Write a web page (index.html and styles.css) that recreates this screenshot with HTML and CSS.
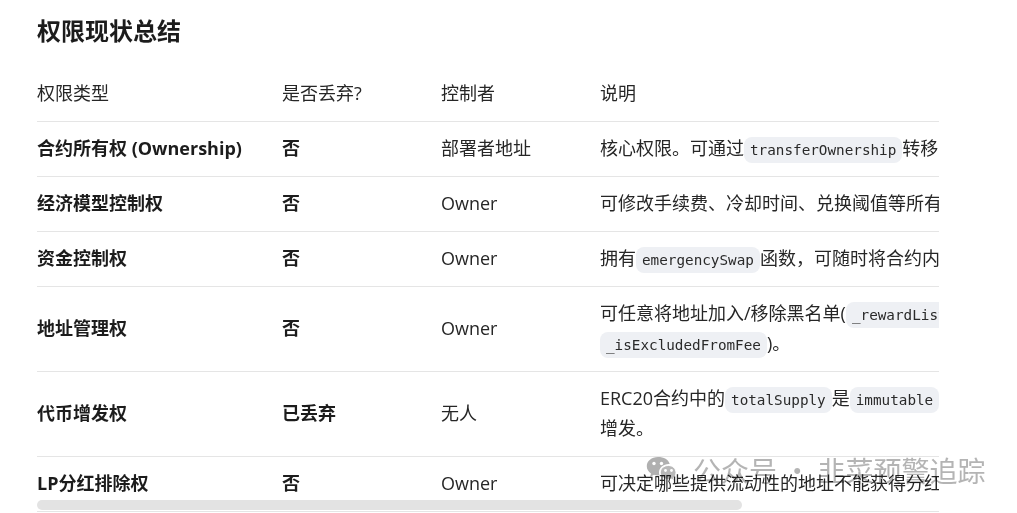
FILE: index.html
```html
<!DOCTYPE html>
<html lang="zh-CN">
<head>
<meta charset="utf-8">
<title>权限现状总结</title>
<link rel="stylesheet" href="styles.css">
</head>
<body>
<main class="page">
  <h2 class="title">权限现状总结</h2>
  <div class="table-wrap">
    <table class="perm">
      <colgroup>
        <col class="c1"><col class="c2"><col class="c3"><col class="c4">
      </colgroup>
      <thead>
        <tr><th>权限类型</th><th>是否丢弃?</th><th>控制者</th><th>说明</th></tr>
      </thead>
      <tbody>
        <tr><td><b>合约所有权 (Ownership)</b></td><td><b>否</b></td><td>部署者地址</td><td>核心权限。可通过<code>transferOwnership</code>转移或放弃所有权。</td></tr>
        <tr><td><b>经济模型控制权</b></td><td><b>否</b></td><td>Owner</td><td>可修改手续费、冷却时间、兑换阈值等所有经济参数。</td></tr>
        <tr><td><b>资金控制权</b></td><td><b>否</b></td><td>Owner</td><td>拥有<code>emergencySwap</code>函数，可随时将合约内代币兑换转出。</td></tr>
        <tr><td><b>地址管理权</b></td><td><b>否</b></td><td>Owner</td><td>可任意将地址加入/移除黑名单(<code>_rewardList</code>)和免费名单(<br><code>_isExcludedFromFee</code>)。</td></tr>
        <tr><td><b>代币增发权</b></td><td><b>已丢弃</b></td><td>无人</td><td>ERC20合约中的<code>totalSupply</code>是<code>immutable</code>的，总量固定无法<br>增发。</td></tr>
        <tr><td><b>LP分红排除权</b></td><td><b>否</b></td><td>Owner</td><td>可决定哪些提供流动性的地址不能获得分红。</td></tr>
      </tbody>
    </table>
    <div class="thumb"></div>
  </div>
  <div class="watermark">
    <svg class="wx" viewBox="0 0 30 28" width="30" height="28" aria-hidden="true">
      <path class="wx-back" d="M12 1C5.6 1 .8 5 .8 10.2c0 3 1.600 5.500 4.200 7.300L4 21l4-2.200c1.300.4 2.600.6 4 .6.500 0 1 0 1.500-.1-.3-1-.5-1.900-.5-2.900 0-4.800 4.300-8.500 9.800-8.500h.9C22.600 3.700 17.800 1 12 1z"/>
      <circle class="wx-eye" cx="8" cy="7.500" r="1.700"/>
      <circle class="wx-eye" cx="15.500" cy="7.500" r="1.700"/>
      <path class="wx-front" d="M22.500 9.500c-4.700 0-8.200 3.100-8.200 7s3.500 7 8.200 7c1 0 2-.1 2.900-.4l3 1.700-.8-2.800c1.500-1.300 2.400-3.200 2.400-5.500 0-3.900-3.500-7-7.500-7z"/>
      <circle class="wx-eye" cx="19.500" cy="14.500" r="1.400"/>
      <circle class="wx-eye" cx="25.500" cy="14.500" r="1.400"/>
    </svg>
    <span class="wm-text">公众号 · 韭菜预警追踪</span>
  </div>
</main>
</body>
</html>
```
FILE: styles.css
```css
html, body {
  margin: 0;
  height: 513px;
  overflow: hidden;
  background: #fff;
}
body {
  font-family: "Open Sans", "Noto Sans CJK SC", sans-serif;
  color: #262626;
}
.page {
  position: relative;
  height: 513px;
  padding: 0 78px 0 37px;
  box-sizing: border-box;
}
.title {
  margin: 0;
  padding-top: 14px;
  height: 67px;
  box-sizing: border-box;
  font-size: 24px;
  line-height: 34px;
  font-weight: 700;
  color: #1c1c1c;
}
.table-wrap {
  position: relative;
  width: 902px;
  height: 446px;
  overflow: hidden;
}
.perm {
  width: 1154px;
  table-layout: fixed;
  border-collapse: collapse;
  font-size: 18px;
  line-height: 30px;
}
.c1 { width: 245px; }
.c2, .c3 { width: 159px; }
.c4 { width: 591px; }
.perm th, .perm td {
  padding: 11px 0 13px;
  text-align: left;
  font-weight: 400;
  border-bottom: 1px solid #e5e5e5;
  white-space: nowrap;
  vertical-align: middle;
}
.perm b {
  font-weight: 700;
  color: #1c1c1c;
}
.perm code {
  display: inline-block;
  height: 26px;
  line-height: 26px;
  padding: 0 6px;
  border-radius: 8px;
  background: #eef0f4;
  font-family: "DejaVu Sans Mono", monospace;
  font-size: 14.300px;
  vertical-align: baseline;
  color: #2a2a2a;
}
.thumb {
  position: absolute;
  left: 0;
  top: 433px;
  width: 705px;
  height: 10px;
  border-radius: 5px;
  background: #e3e3e3;
}
.watermark {
  position: absolute;
  left: 646px;
  top: 452px;
  display: flex;
  align-items: center;
  gap: 17px;
  height: 36px;
  mix-blend-mode: multiply;
}
.wx-back { fill: #b0b0b0; }
.wx-front { fill: #b8b8b8; stroke: #fff; stroke-width: 1; }
.wx-eye { fill: #fff; }
.wm-text {
  font-family: "Noto Sans CJK SC", sans-serif;
  font-size: 28px;
  line-height: 36px;
  color: rgba(130, 130, 130, .6);
  white-space: nowrap;
}
```
